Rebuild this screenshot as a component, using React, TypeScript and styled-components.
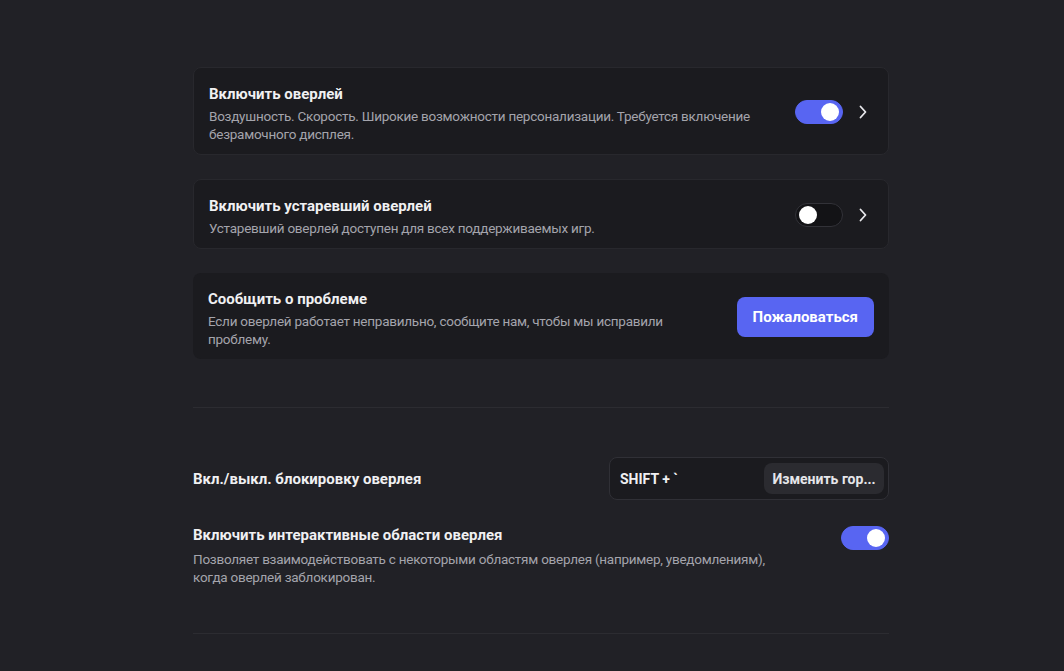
import React from 'react'
import styled, { createGlobalStyle } from 'styled-components'

const GlobalStyle = createGlobalStyle`
    html, body {
        margin: 0;
        padding: 0;
        background: #212126;
    }
    body {
        font-family: Roboto, "Noto Sans", sans-serif;
        -webkit-font-smoothing: antialiased;
    }
`

const Page = styled.div`
    min-height: 671px;
    padding: 67px 0 0 193px;
    box-sizing: border-box;
`

const Column = styled.div`
    width: 696px;
    display: flex;
    flex-direction: column;
`

const CardList = styled.div`
    display: flex;
    flex-direction: column;
    gap: 24px;
`

const Card = styled.div<{ $bordered?: boolean }>`
    display: flex;
    align-items: center;
    gap: 16px;
    background: #1b1b1f;
    border: ${({ $bordered }) => ($bordered ? '1px solid #28282d' : 'none')};
    border-radius: 8px;
    padding: 16px 15px 11px;
`

const TextBlock = styled.div<{ $maxWidth?: number }>`
    flex: 1;
    min-width: 0;
    max-width: ${({ $maxWidth }) => ($maxWidth ? `${$maxWidth}px` : 'none')};
`

const Title = styled.div`
    font-size: 15px;
    line-height: 20px;
    font-weight: 700;
    color: #f0f0f2;
`

const Description = styled.div<{ $gap?: number }>`
    margin-top: ${({ $gap }) => $gap ?? 3}px;
    font-size: 13.5px;
    letter-spacing: -0.25px;
    line-height: 18px;
    color: #a4a4ac;
`

const Controls = styled.div`
    margin-left: auto;
    display: flex;
    align-items: center;
    gap: 10px;
    margin-bottom: 4px;
`

const SwitchTrack = styled.div<{ $on: boolean }>`
    position: relative;
    width: 48px;
    height: 24px;
    box-sizing: border-box;
    border-radius: 12px;
    background: ${({ $on }) => ($on ? '#5865f2' : '#131316')};
    border: 1px solid ${({ $on }) => ($on ? '#5865f2' : '#323238')};
    flex-shrink: 0;
`

const SwitchKnob = styled.div<{ $on: boolean }>`
    position: absolute;
    top: 2px;
    left: ${({ $on }) => ($on ? '25px' : '3px')};
    width: 18px;
    height: 18px;
    border-radius: 50%;
    background: #ffffff;
`

const Chevron = styled.svg`
    width: 20px;
    height: 20px;
    flex-shrink: 0;
`

const PrimaryButton = styled.button`
    flex-shrink: 0;
    height: 40px;
    margin-bottom: 4px;
    padding: 0 16px;
    border: none;
    border-radius: 8px;
    background: #5865f2;
    color: #ffffff;
    font-family: inherit;
    font-size: 15px;
    font-weight: 700;
    cursor: pointer;
`

const Divider = styled.div<{ $top: number }>`
    height: 1px;
    background: #2c2c31;
    margin-top: ${({ $top }) => $top}px;
`

const Row = styled.div<{ $top: number }>`
    display: flex;
    align-items: center;
    justify-content: space-between;
    margin-top: ${({ $top }) => $top}px;
`

const ToggleRow = styled.div<{ $top: number }>`
    display: flex;
    align-items: flex-start;
    justify-content: space-between;
    margin-top: ${({ $top }) => $top}px;

    ${SwitchTrack} {
        margin-top: 1px;
    }
`

const KeybindBox = styled.div`
    width: 280px;
    height: 43px;
    box-sizing: border-box;
    display: flex;
    align-items: center;
    justify-content: space-between;
    padding: 0 4px 0 10px;
    background: #1b1b1f;
    border: 1px solid #303036;
    border-radius: 8px;
`

const KeyCombo = styled.span`
    font-size: 14px;
    font-weight: 700;
    color: #f0f0f2;
`

const SecondaryButton = styled.button`
    width: 120px;
    height: 31px;
    border: none;
    border-radius: 8px;
    background: #2b2b30;
    color: #e6e6ea;
    font-family: inherit;
    font-size: 14px;
    font-weight: 700;
    white-space: nowrap;
    padding: 0 8px;
`

const Switch = ({ on }: { on: boolean }) => (
    <SwitchTrack $on={on}>
        <SwitchKnob $on={on} />
    </SwitchTrack>
)

const ChevronRight = () => (
    <Chevron viewBox="0 0 20 20" fill="none">
        <path d="M7.5 4.5 L12.5 10 L7.5 15.5" stroke="#e8e8ec" strokeWidth="1.8" strokeLinecap="round" strokeLinejoin="round" />
    </Chevron>
)

export default function App() {
    return (
        <>
            <GlobalStyle />
            <Page>
                <Column>
                    <CardList>
                        <Card $bordered>
                            <TextBlock>
                                <Title>Включить оверлей</Title>
                                <Description>
                                    Воздушность. Скорость. Широкие возможности персонализации. Требуется включение
                                    безрамочного дисплея.
                                </Description>
                            </TextBlock>
                            <Controls>
                                <Switch on />
                                <ChevronRight />
                            </Controls>
                        </Card>
                        <Card $bordered>
                            <TextBlock>
                                <Title>Включить устаревший оверлей</Title>
                                <Description>Устаревший оверлей доступен для всех поддерживаемых игр.</Description>
                            </TextBlock>
                            <Controls>
                                <Switch on={false} />
                                <ChevronRight />
                            </Controls>
                        </Card>
                        <Card>
                            <TextBlock>
                                <Title>Сообщить о проблеме</Title>
                                <Description>
                                    Если оверлей работает неправильно, сообщите нам, чтобы мы исправили проблему.
                                </Description>
                            </TextBlock>
                            <PrimaryButton>Пожаловаться</PrimaryButton>
                        </Card>
                    </CardList>

                    <Divider $top={48} />

                    <Row $top={49}>
                        <Title>Вкл./выкл. блокировку оверлея</Title>
                        <KeybindBox>
                            <KeyCombo>SHIFT + `</KeyCombo>
                            <SecondaryButton>Изменить гор...</SecondaryButton>
                        </KeybindBox>
                    </Row>

                    <ToggleRow $top={25}>
                        <TextBlock $maxWidth={600}>
                            <Title>Включить интерактивные области оверлея</Title>
                            <Description $gap={5}>
                                Позволяет взаимодействовать с некоторыми областям оверлея (например, уведомлениям),
                                когда оверлей заблокирован.
                            </Description>
                        </TextBlock>
                        <Switch on />
                    </ToggleRow>

                    <Divider $top={47} />
                </Column>
            </Page>
        </>
    )
}
